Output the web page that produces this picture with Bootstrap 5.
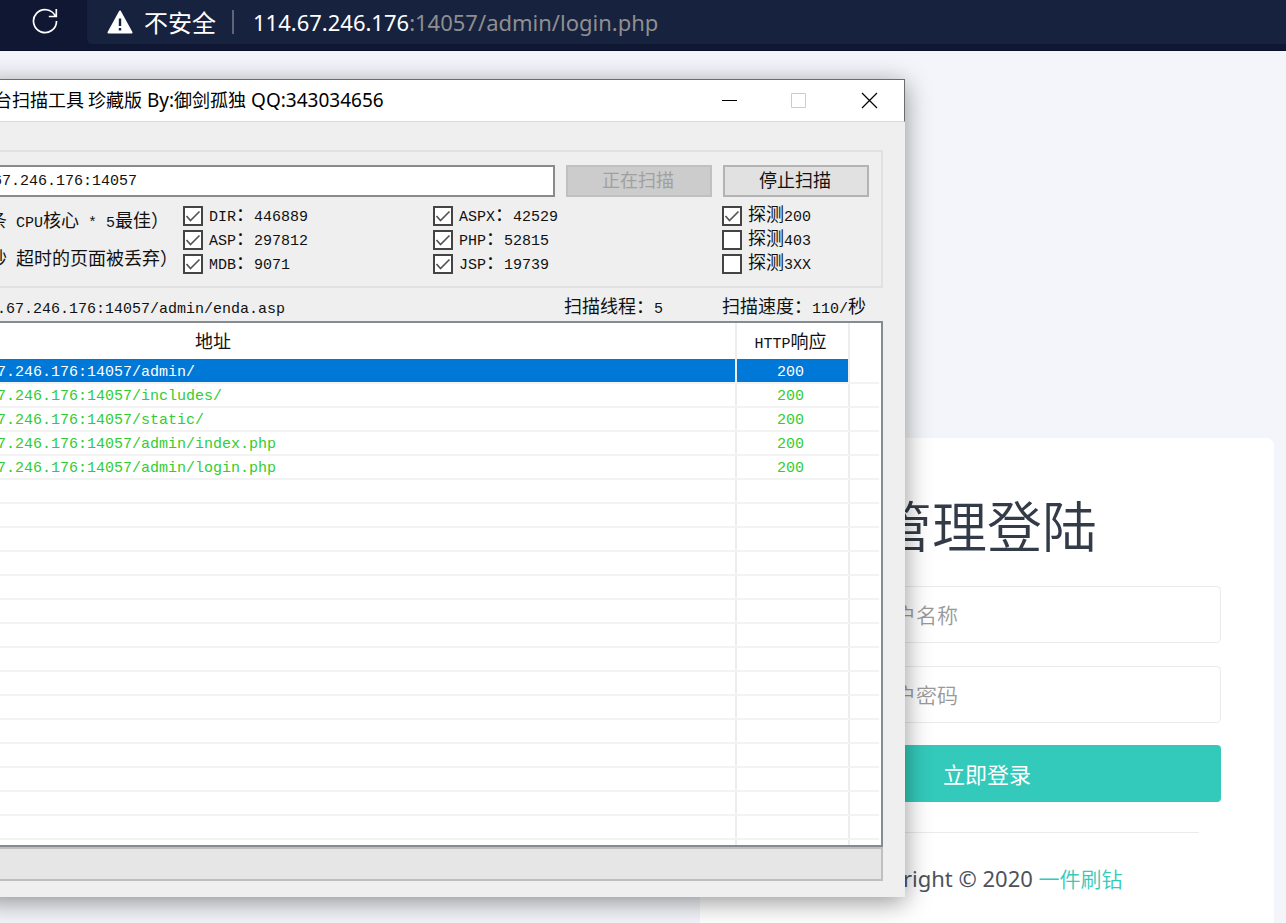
<!DOCTYPE html>
<html lang="zh-CN">
<head>
<meta charset="utf-8">
<meta name="viewport" content="width=device-width, initial-scale=1">
<title>管理登陆</title>
<link rel="stylesheet" href="https://cdn.jsdelivr.net/npm/bootstrap@5.3.0/dist/css/bootstrap.min.css">
<style>
  body { background: #f3f5fa; font-family: "Noto Sans", "Noto Sans CJK SC", sans-serif; }

  /* browser toolbar */
  .toolbar { background: #0f1733; height: 51px; padding-left: 32px; border-bottom: 1px solid #0a1029; color: #fff; }
  .reload { width: 26px; height: 26px; margin: 8px 29px 0 0; }
  .omnibox { background: #17223f; height: 44px; padding-left: 20px; border-radius: 0 0 0 5px; line-height: 44px; }
  .omnibox .warn { width: 26px; height: 24px; margin-right: 11px; }
  .unsafe { font-size: 24px; font-family: "Noto Sans CJK SC", sans-serif; }
  .bar-split { width: 2px; height: 24px; background: #5d6579; margin: 0 19px 0 16px; }
  .url { font-size: 22px; color: #8f8f8f; }
  .url b { font-weight: 400; color: #fff; }

  /* login page */
  .stage { min-height: calc(100vh - 51px); padding: 387px 12px 0 0; }
  .login { width: 574px; border-radius: 8px 8px 0 0; padding: 49px 53px 0; }
  .login h1 { font-family: "Noto Sans CJK SC", sans-serif; font-weight: 350; font-size: 55px; line-height: 72px; color: #323b47; margin-bottom: 27px; }
  .login .form-control, .login .btn { height: 57px; border-radius: 4px; font-family: "Noto Sans CJK SC", sans-serif; }
  .login .form-control { border-color: #ebebeb; font-size: 21px; font-weight: 350; padding: 0 15px 2px; margin-bottom: 23px; }
  .login .form-control::placeholder { color: #999; }
  .login .btn { background: #33cabb; color: #fff; font-size: 22px; margin-top: -1px; }
  .login hr { margin: 30px 22px 0; border-color: #ebebeb; opacity: 1; }
  .copy { font-size: 22px; color: #4d5259; line-height: 32px; margin: 29px 0 0; }
  .copy a { color: #33cabb; text-decoration: none; font-family: "Noto Sans CJK SC", sans-serif; font-weight: 350; font-size: 21px; }

  /* scanner window floating over the page */
  .scanner { left: -20px; right: 381px; top: 28px; background: #efefef; color: #111;
    box-shadow: 0 5px 24px rgba(0, 0, 0, .42); font: 15px/24px "Liberation Mono", monospace; }
  .scanner .han { font-family: "Noto Sans CJK SC", sans-serif; font-size: 18px; line-height: 1; }
  .caption { height: 43px; background: #fff; border: 1px solid #6d6d6d; border-bottom-color: #d9d9d9; padding: 0 26px 2px 13px; color: #000; }
  .caption-text { font-family: "Noto Sans", sans-serif; font-size: 19px; white-space: nowrap; }
  .caption button { width: 18px; height: 18px; padding: 0; border: 0; background: none; display: flex; }
  .caption .winbtns { gap: 52px; }
  .pane { padding: 28px 22px 16px 0; }
  .options { border: 2px solid #e1e1e1; border-left: 0; height: 138px; padding: 13px 12px 0 0; }
  .hosts { gap: 11px; }
  .hostbox { height: 32px; border: 2px solid #8a8a8a; padding: 0 0 0 11px; background: #fff; color: #111; min-width: 0; }
  .push { width: 146px; height: 32px; border: 2px solid #b3b3b3; background: #e1e1e1; color: #111; padding: 0 2px 4px 0; }
  .push:disabled { background: #ccc; border-color: #c0c0c0; color: #a0a0a0; }
  .hint { width: 203px; padding: 8px 0 0 9px; line-height: 38px; height: 88px; white-space: nowrap; }
  .checks { padding-top: 7px; }
  .checks label { display: flex; align-items: center; height: 24px; white-space: nowrap; }
  .checks label > span { padding-top: 2px; }
  .checks .form-check-input { width: 20px; height: 20px; margin: 0 6px 0 0; border: 2px solid #444; border-radius: 0; background-color: #fff; flex: none; }
  .checks .form-check-input:checked { background-size: 100% 100%; background-image: url("data:image/svg+xml,%3Csvg xmlns='http://www.w3.org/2000/svg' viewBox='0 0 16 16'%3E%3Cpath d='M1.500 8l4 4.500L14.500 3.500' fill='none' stroke='%23555' stroke-width='1.700'/%3E%3C/svg%3E"); }
  .checks.kinds { width: 250px; }
  .checks.codes { width: 147px; }
  .status { height: 33px; padding: 6px 0 0 17px; line-height: 32px; white-space: nowrap; }
  .status .threads { width: 158px; }
  .status .speed { width: 161px; }
  .results { border: 2px solid #868b93; border-left: 0; background: #fff; height: 526px; overflow: hidden; padding-right: 2px; }
  .results table { width: 100%; table-layout: fixed; border-collapse: collapse; margin: 0; }
  .results th { height: 36px; font-weight: 400; padding: 5px 0 0; }
  .results th:first-child { padding-left: 215px; }
  .results td { height: 24px; padding: 3px 0 0; line-height: 19px; border-bottom: 2px solid #f3f3f3; color: #32cd32; }
  .results td:first-child { padding-left: 17px; }
  .results th:nth-child(2), .results td:nth-child(2) { padding-right: 4px; }
  .results th:nth-child(-n+2), .results td:nth-child(-n+2) { border-right: 2px solid #ededed; }
  .results .picked td:nth-child(-n+2) { background: #0078d7; color: #fff; }
  .results .c-code { width: 113px; }
  .results .c-rest { width: 30px; }
  .meter { height: 34px; border: 2px solid #bfbfbf; border-left: 0; border-radius: 0; background: #e6e6e6; }
</style>
<script src="https://cdn.jsdelivr.net/npm/bootstrap@5.3.0/dist/js/bootstrap.bundle.min.js"></script>
</head>
<body>
<header class="toolbar d-flex align-items-start">
  <svg class="reload flex-shrink-0" viewBox="0 0 26 26" fill="none" stroke="#fff" stroke-width="1.700"><path d="M23.300 8A11.500 11.500 0 1 0 24.500 13M24.300 1v7.500h-7.500"/></svg>
  <div class="omnibox d-flex align-items-center flex-grow-1">
    <svg class="warn" viewBox="0 0 26 24"><path d="M13 1.500 24.500 22.500H1.500z" fill="#fff" stroke="#fff" stroke-width="2" stroke-linejoin="round"/><path d="M13 8.500v7.500M13 18v2.500" stroke="#17223f" stroke-width="2.400"/></svg>
    <span class="unsafe">不安全</span>
    <span class="bar-split"></span>
    <span class="url"><b>114.67.246.176</b>:14057/admin/login.php</span>
  </div>
</header>

<main class="stage position-relative d-flex justify-content-end overflow-hidden">
  <form class="login bg-white text-center">
    <h1>管理登陆</h1>
    <input class="form-control" type="text" placeholder="请输入您的用户名称" aria-label="用户名称">
    <input class="form-control" type="password" placeholder="请输入您的用户密码" aria-label="用户密码">
    <button class="btn w-100" type="button">立即登录</button>
    <hr>
    <p class="copy">Copyright © 2020 <a href="#">一件刷钻</a></p>
  </form>

  <section class="scanner position-absolute">
    <div class="caption d-flex align-items-center justify-content-between">
      <span class="caption-text"><span class="han">台扫描工具 珍藏版</span> By:<span class="han">御剑孤独</span> QQ:343034656</span>
      <div class="winbtns d-flex">
        <button type="button" aria-label="最小化"><svg width="18" height="18"><path d="M2 9.500h15" stroke="#000"/></svg></button>
        <button type="button" aria-label="最大化" disabled><svg width="18" height="18"><path d="M1.500 2.500h14v14h-14z" fill="none" stroke="#ccc"/></svg></button>
        <button type="button" aria-label="关闭"><svg width="18" height="18"><path d="M2 2l15 15M17 2L2 17" stroke="#000" stroke-width="1.200"/></svg></button>
      </div>
    </div>
    <div class="pane">
      <div class="options">
        <div class="hosts d-flex">
          <input class="hostbox flex-grow-1" type="text" value="67.246.176:14057" aria-label="域名">
          <button class="push han" type="button" disabled>正在扫描</button>
          <button class="push han" type="button">停止扫描</button>
        </div>
        <div class="d-flex">
          <div class="hint flex-shrink-0">
            <div><span class="han">条</span> CPU<span class="han">核心</span> * 5<span class="han">最佳）</span></div>
            <div><span class="han">秒</span> <span class="han">超时的页面被丢弃）</span></div>
          </div>
          <div class="checks kinds flex-shrink-0">
            <label><input class="form-check-input" type="checkbox" checked><span>DIR<span class="han">：</span>446889</span></label>
            <label><input class="form-check-input" type="checkbox" checked><span>ASP<span class="han">：</span>297812</span></label>
            <label><input class="form-check-input" type="checkbox" checked><span>MDB<span class="han">：</span>9071</span></label>
          </div>
          <div class="checks flex-grow-1">
            <label><input class="form-check-input" type="checkbox" checked><span>ASPX<span class="han">：</span>42529</span></label>
            <label><input class="form-check-input" type="checkbox" checked><span>PHP<span class="han">：</span>52815</span></label>
            <label><input class="form-check-input" type="checkbox" checked><span>JSP<span class="han">：</span>19739</span></label>
          </div>
          <div class="checks codes flex-shrink-0">
            <label><input class="form-check-input" type="checkbox" checked><span><span class="han">探测</span>200</span></label>
            <label><input class="form-check-input" type="checkbox"><span><span class="han">探测</span>403</span></label>
            <label><input class="form-check-input" type="checkbox"><span><span class="han">探测</span>3XX</span></label>
          </div>
        </div>
      </div>
      <div class="status d-flex">
        <span class="flex-grow-1">.67.246.176:14057/admin/enda.asp</span>
        <span class="threads"><span class="han">扫描线程：</span>5</span>
        <span class="speed"><span class="han">扫描速度：</span>110/<span class="han">秒</span></span>
      </div>
      <div class="results">
        <table>
          <colgroup><col><col class="c-code"><col class="c-rest"></colgroup>
          <thead><tr><th><span class="han">地址</span></th><th class="text-center">HTTP<span class="han">响应</span></th><th></th></tr></thead>
          <tbody>
            <tr class="picked"><td>7.246.176:14057/admin/</td><td class="text-center">200</td><td></td></tr>
            <tr><td>7.246.176:14057/includes/</td><td class="text-center">200</td><td></td></tr>
            <tr><td>7.246.176:14057/static/</td><td class="text-center">200</td><td></td></tr>
            <tr><td>7.246.176:14057/admin/index.php</td><td class="text-center">200</td><td></td></tr>
            <tr><td>7.246.176:14057/admin/login.php</td><td class="text-center">200</td><td></td></tr>
            <tr><td></td><td></td><td></td></tr>
            <tr><td></td><td></td><td></td></tr>
            <tr><td></td><td></td><td></td></tr>
            <tr><td></td><td></td><td></td></tr>
            <tr><td></td><td></td><td></td></tr>
            <tr><td></td><td></td><td></td></tr>
            <tr><td></td><td></td><td></td></tr>
            <tr><td></td><td></td><td></td></tr>
            <tr><td></td><td></td><td></td></tr>
            <tr><td></td><td></td><td></td></tr>
            <tr><td></td><td></td><td></td></tr>
            <tr><td></td><td></td><td></td></tr>
            <tr><td></td><td></td><td></td></tr>
            <tr><td></td><td></td><td></td></tr>
            <tr><td></td><td></td><td></td></tr>
            <tr><td></td><td></td><td></td></tr>
          </tbody>
        </table>
      </div>
      <div class="progress meter" role="progressbar" aria-label="扫描进度" aria-valuenow="0" aria-valuemin="0" aria-valuemax="100"></div>
    </div>
  </section>
</main>
</body>
</html>
